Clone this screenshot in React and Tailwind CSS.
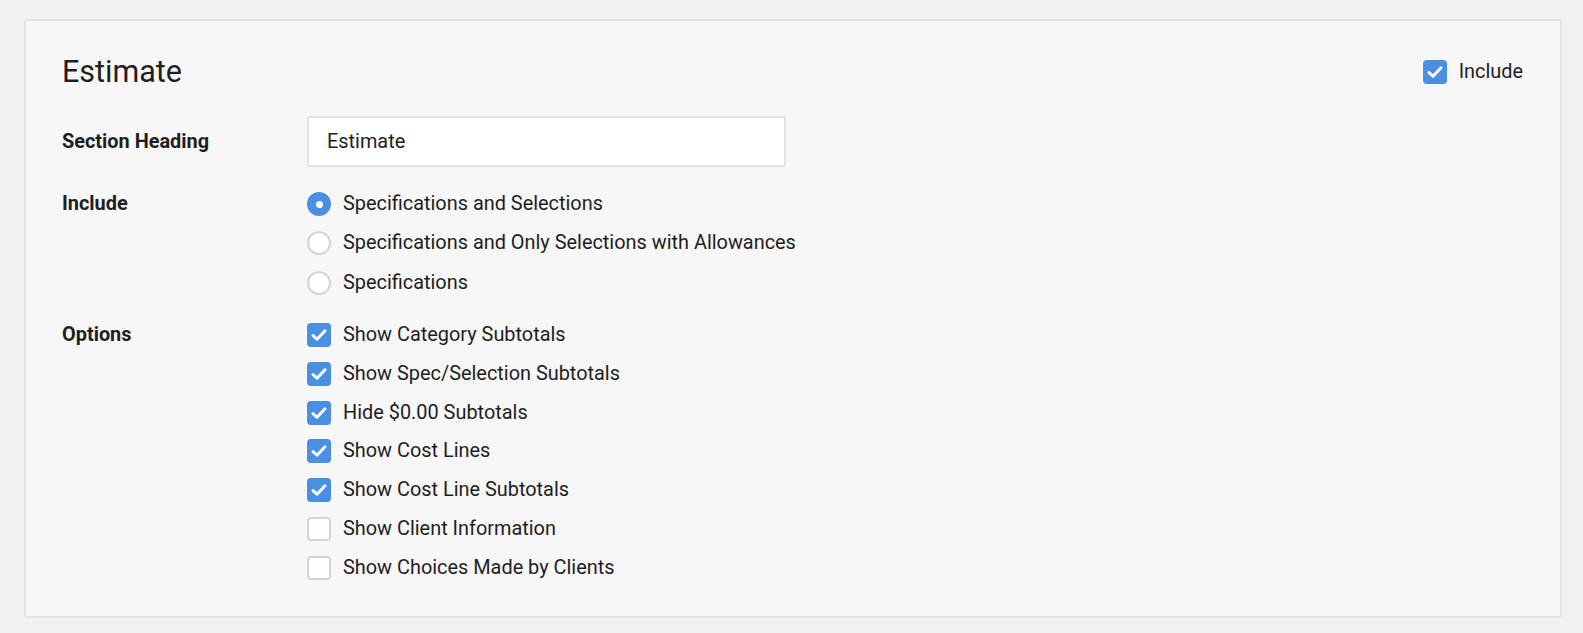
import React from "react";

function Check({ checked }) {
  if (checked) {
    return (
      <span className="flex h-6 w-6 shrink-0 items-center justify-center rounded-[4px] bg-[#4a8fe2]">
        <svg width="20" height="20" viewBox="0 0 20 20" fill="none">
          <path d="M4 10.6 L8 14.2 L16 5.8" stroke="white" strokeWidth="3" strokeLinecap="round" strokeLinejoin="round" />
        </svg>
      </span>
    );
  }
  return <span className="h-6 w-6 shrink-0 rounded-[4px] border-2 border-[#d4d4d4] bg-white" />;
}

function Radio({ checked }) {
  if (checked) {
    return (
      <span className="flex h-6 w-6 shrink-0 items-center justify-center rounded-full bg-[#4a8fe2]">
        <span className="h-[7px] w-[7px] rounded-full bg-white" />
      </span>
    );
  }
  return <span className="h-6 w-6 shrink-0 rounded-full border-2 border-[#d4d4d4] bg-white" />;
}

const radios = [
  ["Specifications and Selections", true],
  ["Specifications and Only Selections with Allowances", false],
  ["Specifications", false],
];

const options = [
  ["Show Category Subtotals", true],
  ["Show Spec/Selection Subtotals", true],
  ["Hide $0.00 Subtotals", true],
  ["Show Cost Lines", true],
  ["Show Cost Line Subtotals", true],
  ["Show Client Information", false],
  ["Show Choices Made by Clients", false],
];

export default function App() {
  return (
    <div className="h-[633px] overflow-hidden bg-[#f2f2f2] pt-[19px] pl-[24px] text-[#1e1e1e] leading-6" style={{ fontFamily: "Roboto, 'Noto Sans', sans-serif" }}>
      <div className="w-[1538px] rounded-[3px] border-2 border-[#e4e4e4] bg-[#f7f7f7] pl-[36px] pr-[37px] pt-[33px] pb-[36px]">
        <div className="flex h-9 items-center justify-between">
          <h1 className="text-[30.5px] leading-9 font-normal">Estimate</h1>
          <div className="flex items-center gap-3">
            <Check checked />
            <span className="text-[19.9px] leading-6">Include</span>
          </div>
        </div>

        <div className="mt-[26px] flex items-center">
          <div className="w-[245px] text-[19.9px] leading-6 font-bold">Section Heading</div>
          <div className="flex h-[51px] w-[479px] items-center rounded-[2px] border-2 border-[#e2e2e2] bg-white pl-[18px] text-[19.9px] leading-6">
            Estimate
          </div>
        </div>

        <div className="mt-[25px] flex">
          <div className="flex h-6 w-[245px] items-center text-[19.9px] leading-6 font-bold">Include</div>
          <div className="flex flex-col gap-[15.4px]">
            {radios.map(([label, c]) => (
              <div key={label} className="flex h-6 items-center gap-3">
                <Radio checked={c} />
                <span className="text-[19.9px] leading-6">{label}</span>
              </div>
            ))}
          </div>
        </div>

        <div className="mt-[28px] flex">
          <div className="flex h-6 w-[245px] items-center text-[19.9px] leading-6 font-bold">Options</div>
          <div className="flex flex-col gap-[14.9px]">
            {options.map(([label, c]) => (
              <div key={label} className="flex h-6 items-center gap-3">
                <Check checked={c} />
                <span className="text-[19.9px] leading-6">{label}</span>
              </div>
            ))}
          </div>
        </div>
      </div>
    </div>
  );
}
